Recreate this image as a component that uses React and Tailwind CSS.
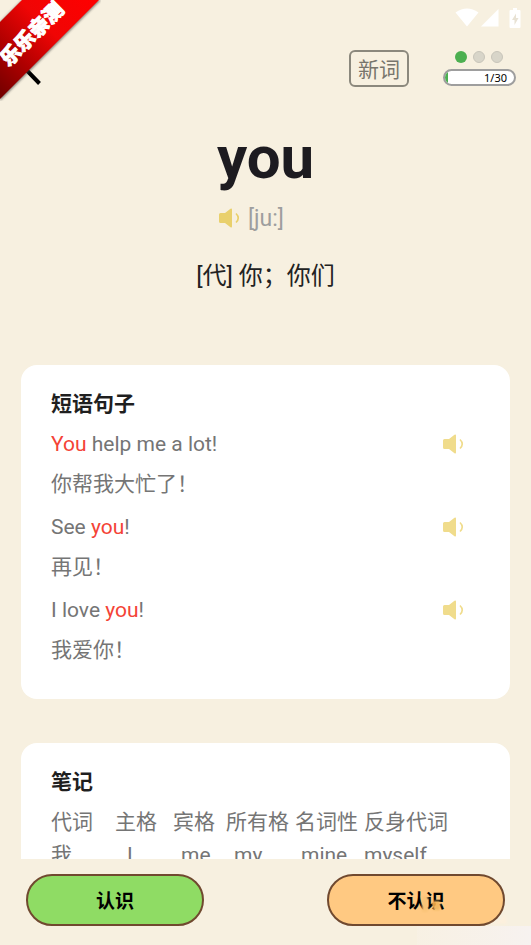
const sentences = [
    { parts: [['You', true], [' help me a lot!', false]], translation: '你帮我大忙了！' },
    { parts: [['See ', false], ['you', true], ['!', false]], translation: '再见！' },
    { parts: [['I love ', false], ['you', true], ['!', false]], translation: '我爱你！' }
];

function SpeakerIcon({ className }) {
    return (
        <svg viewBox="0 0 21 20" className={className} aria-hidden="true">
            <path d="M1.500 5H6L11.500.800Q13 0 13 1.500V18.500Q13 20 11.500 19.200L6 15H1.500Q0 15 0 13.500V6.500Q0 5 1.500 5z" fill="currentColor" />
            <path d="M17 5.500q4.500 4.500 0 9" fill="none" stroke="currentColor" strokeWidth="1.600" />
        </svg>
    );
}

function StatusBar() {
    return (
        <div className="flex h-9 items-center justify-end pr-2.5 text-white">
            <svg viewBox="0 0 24 20" className="mr-0.5 h-5 w-6" aria-hidden="true">
                <path d="M12 18.500L.5 4.500Q12-3.500 23.500 4.500z" fill="currentColor" />
            </svg>
            <svg viewBox="0 0 18 18" className="mr-2.5 h-[18px] w-[18px]" aria-hidden="true">
                <path d="M17.500 0v17.500H0z" fill="currentColor" />
            </svg>
            <svg viewBox="0 0 12 20" className="h-5 w-3" aria-hidden="true">
                <path d="M4 0h4v2h2.500q1 0 1 1v16q0 1-1 1h-9q-1 0-1-1V3q0-1 1-1H4z" fill="currentColor" />
                <path d="M7 5.500L3 12h2.500v5L9.500 10H7z" fill="#e8e2d4" />
            </svg>
        </div>
    );
}

function Ribbon() {
    return (
        <div className="absolute left-0 top-0 h-[101px] w-[101px] overflow-hidden">
            <svg viewBox="0 0 101 101" className="absolute inset-0 h-full w-full" aria-hidden="true">
                <defs>
                    <linearGradient id="ribbon" x1="0" y1="1" x2="1" y2="0">
                        <stop offset="0" stopColor="#700000" />
                        <stop offset="0.3" stopColor="#b00000" />
                        <stop offset="0.6" stopColor="#f00505" />
                        <stop offset="1" stopColor="#ff0000" />
                    </linearGradient>
                    <filter id="ribbonShadow">
                        <feGaussianBlur stdDeviation="1.2" />
                    </filter>
                </defs>
                <path d="M22 0H101L0 101V22z" fill="#444" opacity="0.6" filter="url(#ribbonShadow)" />
                <path d="M22 0H99L0 99V22z" fill="url(#ribbon)" />
            </svg>
            <span className="absolute -left-2 top-5 w-20 -rotate-45 text-center text-xl font-black leading-7 whitespace-nowrap text-white [-webkit-text-stroke:1px_white]">
                乐乐亲测
            </span>
        </div>
    );
}

function Header() {
    return (
        <header className="flex h-16 items-center pl-5 pr-[15px]">
            <button type="button" aria-label="返回" className="text-black">
                <svg viewBox="0 0 24 36" className="h-9 w-6" aria-hidden="true">
                    <path d="M19.500 2L4 17.500L19.500 33.500" fill="none" stroke="currentColor" strokeWidth="4" />
                </svg>
            </button>
            <span className="ml-auto mr-[34px] flex h-[37px] w-[60px] items-center justify-center rounded-md border-2 border-[#8b887d] pt-1.5 text-[21px] text-[#77756c]">
                新词
            </span>
            <div className="flex w-[73px] flex-col">
                <div className="flex gap-1.5 pl-3">
                    <span className="size-3 rounded-full bg-[#4caf50]" />
                    <span className="size-3 rounded-full border border-[#c8c5ba] bg-[#d8d5c9]" />
                    <span className="size-3 rounded-full border border-[#c8c5ba] bg-[#d8d5c9]" />
                </div>
                <div className="mt-1.5 h-[17px] overflow-hidden rounded-full border-2 border-[#9e9e9e] bg-white">
                    <div className="flex h-full items-center justify-end border-l-3 border-[#4caf50] pr-[7px] font-['Noto_Sans'] text-[11px] leading-none text-black">
                        1/30
                    </div>
                </div>
            </div>
        </header>
    );
}

function Card({ title, children }) {
    return (
        <section className="rounded-2xl bg-white px-[30px] pb-[26px] pt-[19px]">
            <h2 className="text-[21px] font-bold leading-10 text-[#1f1f1f]">{title}</h2>
            {children}
        </section>
    );
}

export default function App() {
    return (
        <div className="relative flex h-screen flex-col overflow-hidden bg-[#f7f0e0] font-[Roboto,'Noto_Sans_CJK_SC',sans-serif]">
            <StatusBar />
            <Header />

            <main className="min-h-0 flex-1 overflow-y-auto px-[21px] [scrollbar-width:none]">
                <div className="flex h-[265px] flex-col items-center pt-[18px]">
                    <h1 className="text-6xl font-bold leading-20 text-[#1d1b20]">you</h1>
                    <div className="mt-0.5 flex h-9 items-center gap-2 pr-7 text-[23px] text-[#9e9e9e]">
                        <button type="button" aria-label="播放发音" className="text-[#e9d06c]">
                            <SpeakerIcon className="h-5 w-[21px]" />
                        </button>
                        <span className="pt-0.5">[ju:]</span>
                    </div>
                    <p className="mt-5 text-2xl leading-10 text-[#222]">[代] 你；你们</p>
                </div>

                <div className="flex flex-col gap-11">
                    <Card title="短语句子">
                        <ul className="text-[21px] leading-10 text-[#757575]">
                            {sentences.map((sentence) => (
                                <li key={sentence.translation} className="pb-[3px]">
                                    <div className="flex items-center justify-between pr-4">
                                        <p>
                                            {sentence.parts.map(([text, hit]) => (
                                                <span key={text} className={hit ? 'text-[#f44336]' : ''}>{text}</span>
                                            ))}
                                        </p>
                                        <button type="button" aria-label="播放句子" className="text-[#f0dc8c]">
                                            <SpeakerIcon className="h-5 w-[21px]" />
                                        </button>
                                    </div>
                                    <p>{sentence.translation}</p>
                                </li>
                            ))}
                        </ul>
                    </Card>

                    <Card title="笔记">
                        <table className="mt-1 text-left text-[21px] leading-[33px] whitespace-nowrap text-[#757575]">
                            <thead>
                                <tr>
                                    <th className="pr-[22px] font-normal">代词</th>
                                    <th className="pr-4 font-normal">主格</th>
                                    <th className="pr-[11px] font-normal">宾格</th>
                                    <th className="pr-1.5 font-normal">所有格</th>
                                    <th className="pr-1.5 font-normal">名词性</th>
                                    <th className="font-normal">反身代词</th>
                                </tr>
                            </thead>
                            <tbody>
                                <tr>
                                    <td>我</td>
                                    <td className="pl-3">I</td>
                                    <td className="pl-2">me</td>
                                    <td className="pl-2">my</td>
                                    <td className="pl-1.5">mine</td>
                                    <td>myself</td>
                                </tr>
                            </tbody>
                        </table>
                    </Card>
                </div>
            </main>

            <footer className="flex h-[86px] shrink-0 items-start justify-between px-[26px] pt-[15px] text-[19px] font-bold text-black">
                <button type="button" className="h-[52px] w-[178px] rounded-full border-2 border-[#70492f] bg-[#8fdc64] pt-1">
                    认识
                </button>
                <button type="button" className="h-[52px] w-[178px] rounded-full border-2 border-[#70492f] bg-[#ffc982] pt-1">
                    不认识
                </button>
            </footer>

            <Ribbon />

            {/* soft haze in the corner */}
            <svg viewBox="0 0 116 55" className="pointer-events-none absolute bottom-0 right-0 h-[55px] w-[116px]" aria-hidden="true">
                <defs>
                    <linearGradient id="haze" x1="0" y1="0" x2="1" y2="0">
                        <stop offset="0" stopColor="#f8f2ec" stopOpacity="0.3" />
                        <stop offset="1" stopColor="#f7f2f0" />
                    </linearGradient>
                    <filter id="soft" x="-30%" y="-30%" width="160%" height="160%">
                        <feGaussianBlur stdDeviation="1" />
                    </filter>
                </defs>
                <rect x="2" y="36" width="114" height="19" fill="url(#haze)" />
                <path d="M90 24Q88 31 74 34H92z" fill="#fff0dc" opacity="0.7" filter="url(#soft)" />
                <rect x="7" y="6" width="6" height="16" fill="#fac478" filter="url(#soft)" />
                <rect x="18" y="11" width="7" height="9" fill="#f2b861" filter="url(#soft)" />
                <circle cx="19" cy="14" r="2" fill="#d98e30" opacity="0.6" />
            </svg>
        </div>
    );
}
